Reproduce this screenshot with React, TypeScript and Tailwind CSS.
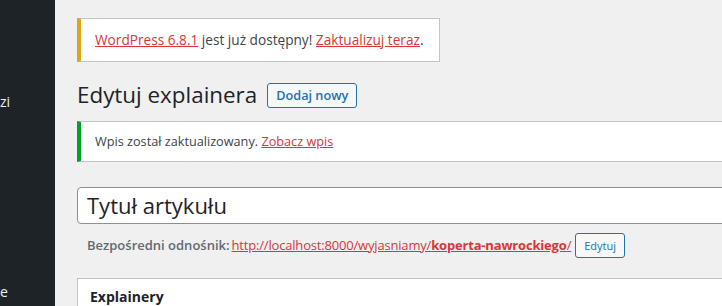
export default function App() {
  const font = { fontFamily: '"Open Sans", "Noto Sans", sans-serif' };
  return (
    <div className="flex h-[306px] w-[722px] overflow-hidden bg-[#f0f0f1] text-[12.7px] text-[#3c434a]" style={font}>
      {/* Sidebar (przycięty) */}
      <div className="relative w-[55px] shrink-0 bg-[#1d2327] text-[14px] text-[#f0f0f1]">
        <div className="absolute left-0 top-[92px] leading-[20px]">zi</div>
        <div className="absolute left-0 top-[282px] leading-[20px]">e</div>
      </div>

      {/* Treść */}
      <div className="min-w-0 flex-1 pl-[22px]">
        <div className="w-[900px]">
          {/* Powiadomienie o aktualizacji */}
          <div className="mt-[18px] flex h-[44px] w-[363px] items-center border border-l-4 border-[#c3c4c7] border-l-[#dba617] bg-white pl-[14px] text-[13.65px]">
            <p>
              <a className="text-[#d63638] underline">WordPress 6.8.1</a> jest już dostępny!{' '}
              <a className="text-[#d63638] underline">Zaktualizuj teraz</a>.
            </p>
          </div>

          {/* Nagłówek */}
          <div className="mt-[20px] flex h-[26px] items-center gap-[10px]">
            <h1 className="text-[22.4px] font-normal leading-[26px] text-[#1d2327]">Edytuj explainera</h1>
            <button className="h-[25px] rounded-[3px] border border-[#2271b1] bg-[#f6f7f7] px-[8px] text-[12.7px] font-semibold leading-[23px] text-[#2271b1]">
              Dodaj nowy
            </button>
          </div>

          {/* Powiadomienie o zapisie */}
          <div className="mt-[13px] flex h-[41px] items-center border border-l-4 border-[#c3c4c7] border-l-[#00a32a] bg-white pl-[14px]">
            <p>
              Wpis został zaktualizowany. <a className="text-[#d63638] underline">Zobacz wpis</a>
            </p>
          </div>

          {/* Tytuł */}
          <div className="mt-[25px] flex h-[37px] items-center rounded-[4px] border border-[#8c8f94] bg-white pb-[2px] pl-[9px]">
            <span className="text-[22px] leading-[34px] text-[#1d2327]">Tytuł artykułu</span>
          </div>

          {/* Bezpośredni odnośnik */}
          <div className="mt-[9px] flex h-[25px] items-center pl-[10px] text-[13px]">
            <strong className="font-semibold text-[#646970]">Bezpośredni odnośnik:</strong>
            <a className="ml-[2px] tracking-[-0.18px] text-[#d63638] underline">
              http://localhost:8000/wyjasniamy/<strong className="font-bold">koperta-nawrockiego</strong>/
            </a>
            <button className="ml-[4px] h-[25px] rounded-[3px] border border-[#2271b1] bg-[#f6f7f7] px-[8px] text-[11px] leading-[23px] text-[#2271b1]">
              Edytuj
            </button>
          </div>

          {/* Panel Explainery */}
          <div className="mt-[20px] h-[60px] border border-[#c3c4c7] bg-white">
            <h2 className="px-[12px] pt-[8px] text-[14px] font-bold leading-[20px] text-[#1d2327]">Explainery</h2>
          </div>
        </div>
      </div>
    </div>
  );
}
